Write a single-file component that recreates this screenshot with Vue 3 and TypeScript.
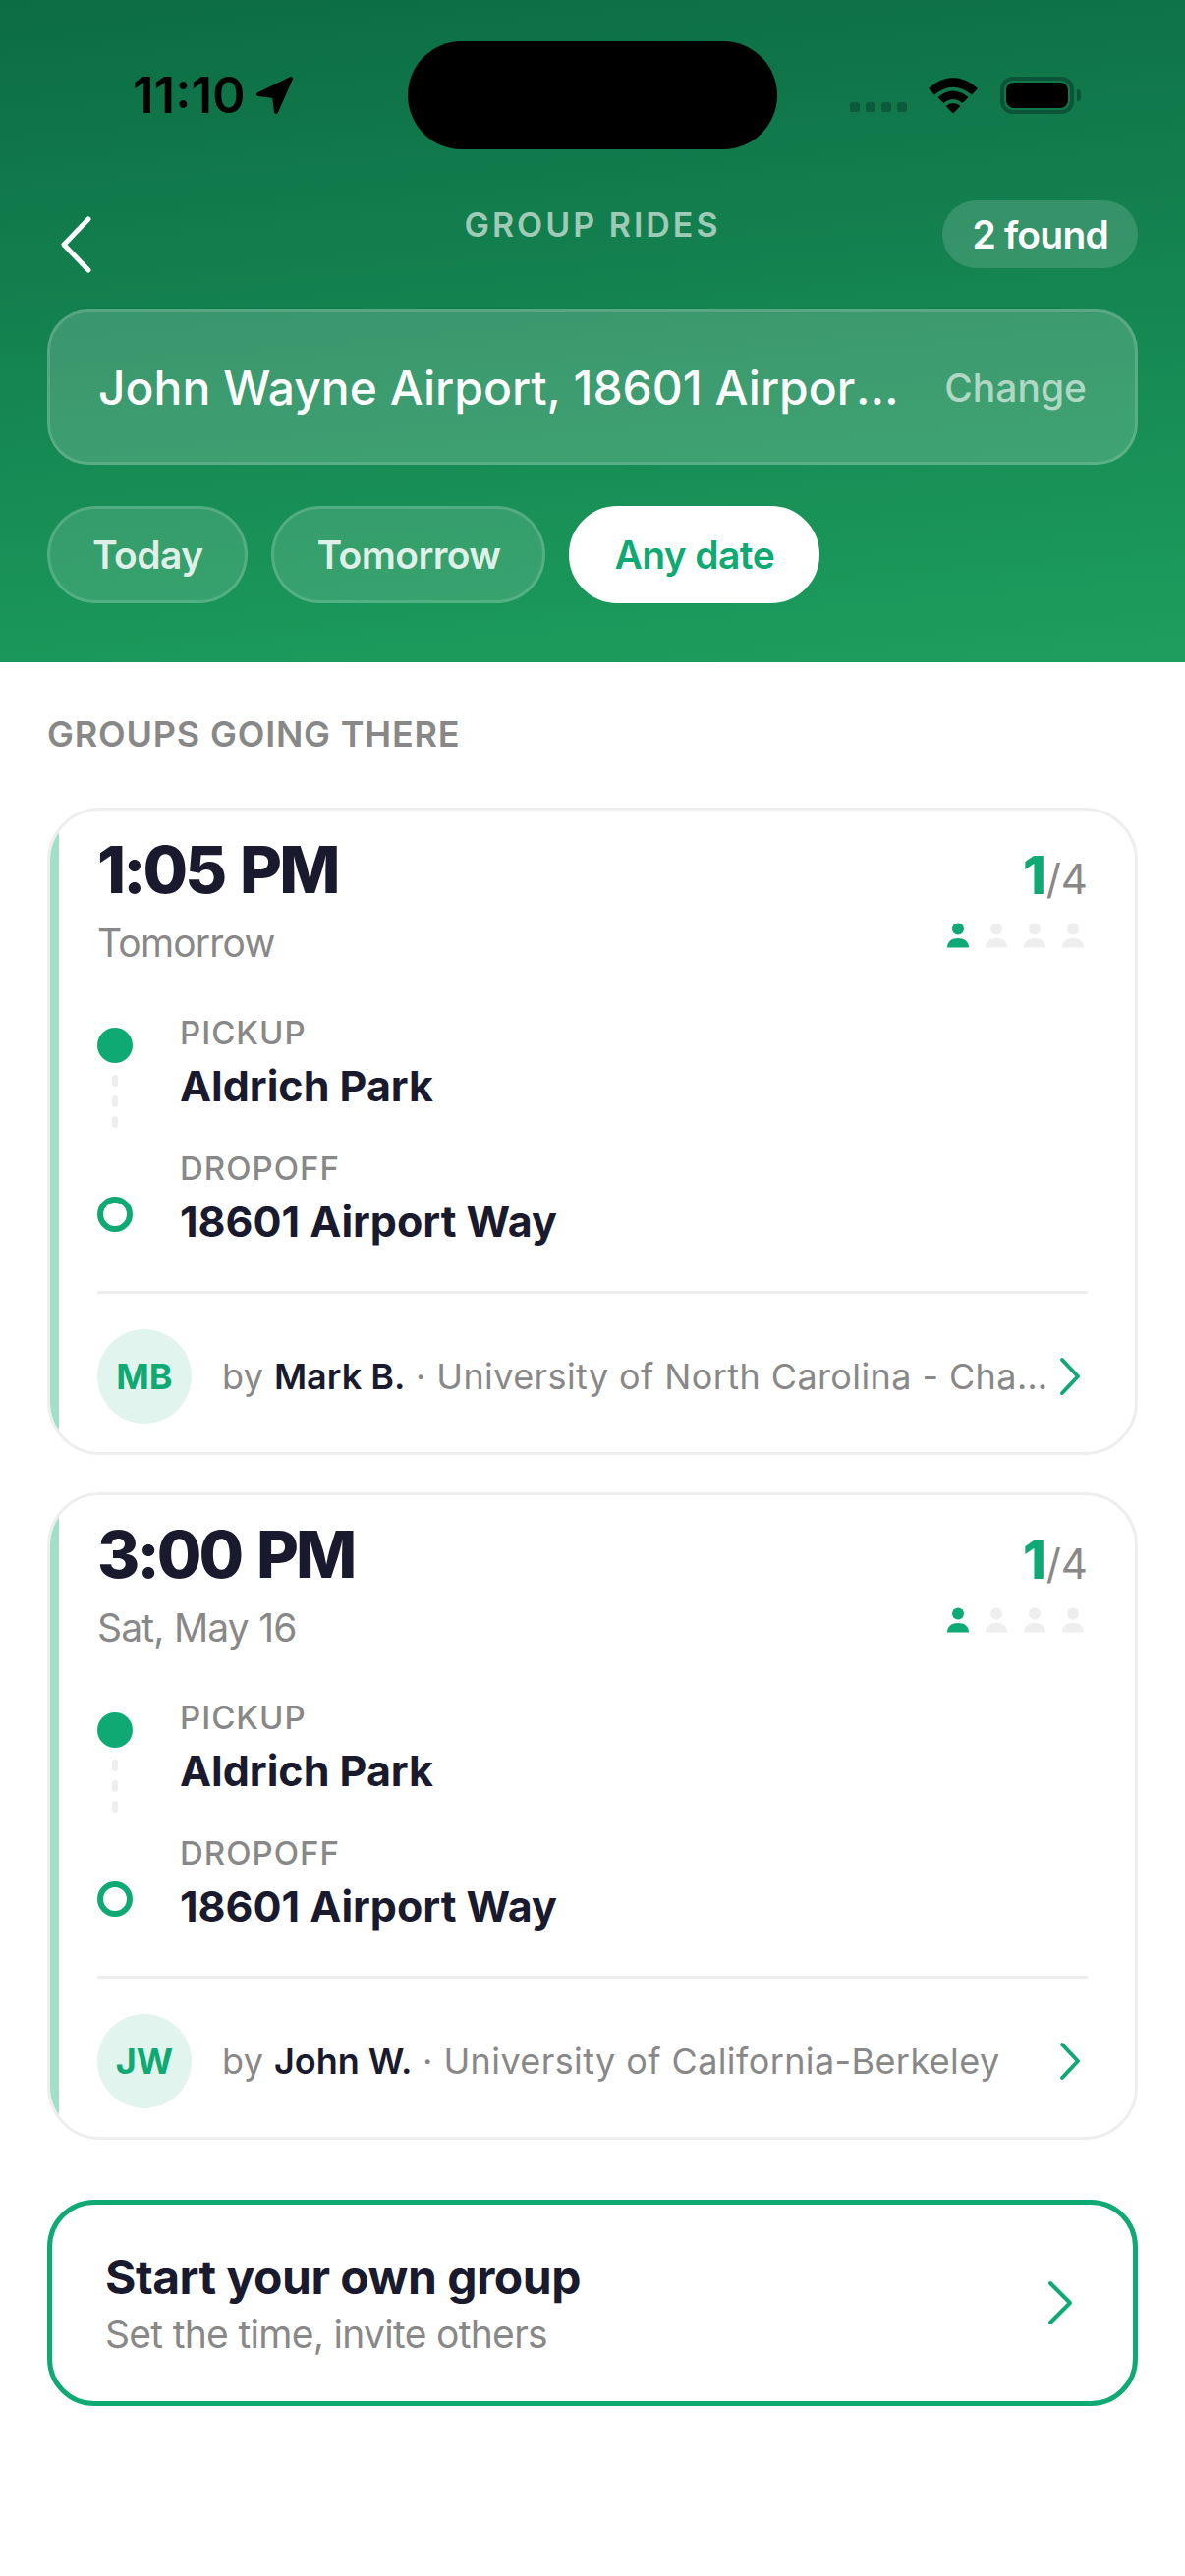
<script setup lang="ts">
interface Ride {
  time: string
  day: string
  taken: number
  seats: number
  pickup: string
  dropoff: string
  initials: string
  driver: string
  school: string
}

const dateFilters = ['Today', 'Tomorrow', 'Any date']
const activeFilter = 'Any date'

const rides: Ride[] = [
  {
    time: '1:05 PM',
    day: 'Tomorrow',
    taken: 1,
    seats: 4,
    pickup: 'Aldrich Park',
    dropoff: '18601 Airport Way',
    initials: 'MB',
    driver: 'Mark B.',
    school: 'University of North Carolina - Chapel Hill',
  },
  {
    time: '3:00 PM',
    day: 'Sat, May 16',
    taken: 1,
    seats: 4,
    pickup: 'Aldrich Park',
    dropoff: '18601 Airport Way',
    initials: 'JW',
    driver: 'John W.',
    school: 'University of California-Berkeley',
  },
]
</script>

<template>
  <div class="screen">
    <header class="hero">
      <div class="status">
        <div class="status-left">
          <span class="clock">11:10</span>
          <svg class="arrow" width="40" height="40" viewBox="0 0 40 40">
            <path d="M3 19 L36 3 L21 37 L19 21 Z" fill="#000" stroke="#000" stroke-width="4" stroke-linejoin="round" />
          </svg>
        </div>
        <div class="island"></div>
        <div class="status-right">
          <div class="signal"><i></i><i></i><i></i><i></i></div>
          <svg width="51" height="37" viewBox="0 0 51 37">
            <path d="M0 11 Q25 -11 50 11 L44 17.5 Q25 2 6 17.5Z" fill="#000" />
            <path d="M9.5 20 Q25 7 40.5 20 L34.5 26 Q25 18 15.5 26Z" fill="#000" />
            <path d="M17.5 29 Q25 23 32.5 29 L25 36.5Z" fill="#000" />
          </svg>
          <div class="battery"><div class="battery-level"></div></div>
        </div>
      </div>

      <div class="nav">
        <svg class="back" width="36" height="60" viewBox="0 0 36 60">
          <path d="M32 4 L7 30 L32 56" fill="none" stroke="#fff" stroke-width="5" stroke-linecap="round" stroke-linejoin="round" />
        </svg>
        <div class="nav-title">GROUP RIDES</div>
        <div class="nav-end"><span class="found">2 found</span></div>
      </div>

      <div class="search">
        <span class="search-text">John Wayne Airport, 18601 Airport Way</span>
        <span class="search-change">Change</span>
      </div>

      <div class="chips">
        <button v-for="f in dateFilters" :key="f" class="chip" :class="{ active: f === activeFilter }">{{ f }}</button>
      </div>
    </header>

    <main class="content">
      <h2 class="section">GROUPS GOING THERE</h2>

      <article v-for="ride in rides" :key="ride.time" class="card">
        <div class="card-top">
          <div>
            <div class="time">{{ ride.time }}</div>
            <div class="day">{{ ride.day }}</div>
          </div>
          <div class="capacity">
            <div class="count"><b>{{ ride.taken }}</b>/{{ ride.seats }}</div>
            <div class="people">
              <svg v-for="n in ride.seats" :key="n" width="24" height="26" viewBox="0 0 24 26" :class="n <= ride.taken ? 'on' : 'off'">
                <circle cx="12" cy="6.5" r="6" />
                <path d="M1 25.5 C1 19 6 16 12 16 C18 16 23 19 23 25.5 Z" />
              </svg>
            </div>
          </div>
        </div>

        <div class="route">
          <div class="markers">
            <span class="dot"></span>
            <span class="dash"></span>
            <span class="dash"></span>
            <span class="dash"></span>
            <span class="ring"></span>
          </div>
          <div class="stops">
            <div class="stop">
              <div class="stop-label">PICKUP</div>
              <div class="stop-name">{{ ride.pickup }}</div>
            </div>
            <div class="stop">
              <div class="stop-label">DROPOFF</div>
              <div class="stop-name">{{ ride.dropoff }}</div>
            </div>
          </div>
        </div>

        <div class="card-foot">
          <div class="avatar">{{ ride.initials }}</div>
          <div class="by">by <strong>{{ ride.driver }}</strong> · {{ ride.school }}</div>
          <svg class="chev" width="24" height="40" viewBox="0 0 24 40">
            <path d="M4 3 L20 20 L4 37" fill="none" stroke="#0faa73" stroke-width="4" stroke-linecap="round" stroke-linejoin="round" />
          </svg>
        </div>
      </article>

      <div class="own">
        <div class="own-text">
          <div class="own-title">Start your own group</div>
          <div class="own-sub">Set the time, invite others</div>
        </div>
        <svg width="28" height="46" viewBox="0 0 28 46">
          <path d="M4 3 L24 23 L4 43" fill="none" stroke="#0faa73" stroke-width="4" stroke-linecap="round" stroke-linejoin="round" />
        </svg>
      </div>
    </main>
  </div>
</template>

<style>
html, body {
  margin: 0;
  background: #fff;
}
</style>

<style scoped>
.screen {
  width: 1206px;
  height: 2622px;
  overflow: hidden;
  background: #fff;
  font-family: Inter, "Noto Sans", sans-serif;
  color: #1a1a2e;
}

/* green top section */
.hero {
  height: 674px;
  box-sizing: border-box;
  padding-top: 42px;
  background: linear-gradient(175deg, #0c6c44 0%, #1d9e5e 100%);
}

.status {
  display: flex;
  align-items: center;
  height: 110px;
}

.status-left {
  width: 415px;
  box-sizing: border-box;
  padding-left: 135px;
  display: flex;
  align-items: center;
  gap: 10px;
}

.clock {
  font-size: 51px;
  font-weight: 600;
  line-height: 60px;
  color: #000;
}

.island {
  width: 376px;
  height: 110px;
  border-radius: 55px;
  background: #000;
}

.status-right {
  flex: 1;
  display: flex;
  align-items: center;
  padding-left: 74px;
  gap: 22px;
}

.signal {
  display: flex;
  gap: 6px;
  align-self: flex-end;
  margin-bottom: 2px;
}

.signal i {
  width: 10px;
  height: 10px;
  border-radius: 3px;
  background: #0b5a39;
}

.battery {
  position: relative;
  width: 75px;
  height: 38px;
  box-sizing: border-box;
  border: 4px solid #0b5438;
  border-radius: 13px;
  padding: 2px;
}

.battery::after {
  content: "";
  position: absolute;
  right: -11px;
  top: 9px;
  width: 4px;
  height: 12px;
  border-radius: 0 4px 4px 0;
  background: #0b5438;
}

.battery-level {
  height: 100%;
  border-radius: 8px;
  background: #000;
}

.nav {
  display: grid;
  grid-template-columns: 1fr auto 1fr;
  align-items: start;
  height: 111px;
  margin-top: 52px;
  padding: 0 48px;
}

.back {
  margin: 15px 0 0 10px;
}

.nav-title {
  margin-top: 5px;
  font-size: 34px;
  line-height: 40px;
  font-weight: 600;
  letter-spacing: 3px;
  color: rgba(255, 255, 255, 0.6);
}

.nav-end {
  display: flex;
  justify-content: flex-end;
}

.found {
  height: 69px;
  line-height: 69px;
  padding: 0 30px;
  border-radius: 35px;
  background: rgba(255, 255, 255, 0.15);
  color: #fff;
  font-size: 39px;
  font-weight: 600;
  letter-spacing: -0.8px;
}

.search {
  display: flex;
  align-items: center;
  justify-content: space-between;
  gap: 40px;
  height: 158px;
  box-sizing: border-box;
  margin: 0 48px;
  padding: 0 49px;
  border: 3px solid rgba(255, 255, 255, 0.15);
  border-radius: 42px;
  background: rgba(255, 255, 255, 0.17);
}

.search-text {
  flex: 1;
  min-width: 0;
  overflow: hidden;
  white-space: nowrap;
  text-overflow: ellipsis;
  font-size: 48px;
  font-weight: 500;
  color: #fff;
}

.search-change {
  font-size: 39px;
  font-weight: 500;
  color: rgba(255, 255, 255, 0.6);
}

.chips {
  display: flex;
  gap: 24px;
  margin: 42px 48px 0;
}

.chip {
  height: 99px;
  padding: 0 43px;
  border: 3px solid rgba(255, 255, 255, 0.15);
  border-radius: 50px;
  background: rgba(255, 255, 255, 0.13);
  color: rgba(255, 255, 255, 0.85);
  font-family: inherit;
  font-size: 39px;
  font-weight: 600;
  letter-spacing: -0.6px;
}

.chip.active {
  border-color: #fff;
  background: #fff;
  color: #0faa73;
}

/* list of rides */
.content {
  padding: 52px 48px 0;
}

.section {
  margin: 0 0 54px;
  font-size: 36px;
  line-height: 42px;
  font-weight: 600;
  letter-spacing: 0.8px;
  color: #888;
}

.card {
  position: relative;
  overflow: hidden;
  box-sizing: border-box;
  height: 659px;
  margin-bottom: 38px;
  padding: 24px 48px 0;
  border: 3px solid #eee;
  border-radius: 54px;
  background: #fff;
}

.card::before {
  content: "";
  position: absolute;
  left: 0;
  top: 0;
  bottom: 0;
  width: 9px;
  background: #a0dfc8;
}

.card-top {
  display: flex;
  justify-content: space-between;
}

.time {
  font-size: 66px;
  line-height: 72px;
  font-weight: 800;
  letter-spacing: -2.9px;
  word-spacing: 4px;
}

.day {
  margin-top: 15px;
  font-size: 39px;
  line-height: 48px;
  letter-spacing: -0.8px;
  color: #888;
}

.capacity {
  display: flex;
  flex-direction: column;
  align-items: flex-end;
  padding-top: 12px;
}

.count {
  font-size: 42px;
  line-height: 60px;
  color: #888;
}

.count b {
  font-size: 54px;
  font-weight: 800;
  color: #0faa73;
}

.people {
  display: flex;
  gap: 15px;
  margin-top: 14px;
  margin-right: 3px;
}

.people .on {
  fill: #0faa73;
}

.people .off {
  fill: #eee;
}

.route {
  display: flex;
  gap: 48px;
  margin-top: 46px;
}

.markers {
  display: flex;
  flex-direction: column;
  align-items: center;
  width: 36px;
  padding-top: 16px;
}

.dot {
  width: 36px;
  height: 36px;
  border-radius: 50%;
  background: #0faa73;
  margin-bottom: 3px;
}

.dash {
  width: 6px;
  height: 12px;
  margin-top: 9px;
  border-radius: 3px;
  background: #eee;
}

.ring {
  width: 36px;
  height: 36px;
  box-sizing: border-box;
  margin-top: 70px;
  border: 6px solid #0faa73;
  border-radius: 50%;
}

.stops {
  display: flex;
  flex-direction: column;
  gap: 36px;
}

.stop-label {
  font-size: 33px;
  line-height: 42px;
  font-weight: 500;
  letter-spacing: 1px;
  color: #888;
}

.stop-name {
  margin-top: 6px;
  font-size: 43px;
  line-height: 54px;
  font-weight: 700;
}

.card-foot {
  display: flex;
  align-items: center;
  margin-top: 44px;
  padding-top: 36px;
  border-top: 3px solid #eee;
}

.avatar {
  flex: none;
  display: flex;
  align-items: center;
  justify-content: center;
  width: 96px;
  height: 96px;
  border-radius: 50%;
  background: #e1f4ed;
  color: #0faa73;
  font-size: 36px;
  font-weight: 700;
}

.by {
  flex: 1;
  min-width: 0;
  margin: 0 8px 0 31px;
  overflow: hidden;
  white-space: nowrap;
  text-overflow: ellipsis;
  font-size: 36px;
  line-height: 48px;
  letter-spacing: 0.4px;
  color: #888;
}

.by strong {
  font-weight: 600;
  letter-spacing: 0;
  color: #1a1a2e;
}

.chev {
  flex: none;
  margin-right: 6px;
}

.own {
  display: flex;
  align-items: center;
  justify-content: space-between;
  box-sizing: border-box;
  height: 210px;
  margin-top: 61px;
  padding: 0 60px 0 54px;
  border: 5px solid #0faa73;
  border-radius: 48px;
}

.own-title {
  font-size: 48px;
  line-height: 60px;
  font-weight: 700;
  letter-spacing: -0.5px;
}

.own-sub {
  margin-top: 4px;
  font-size: 39px;
  line-height: 48px;
  letter-spacing: -0.7px;
  color: #888;
}
</style>
